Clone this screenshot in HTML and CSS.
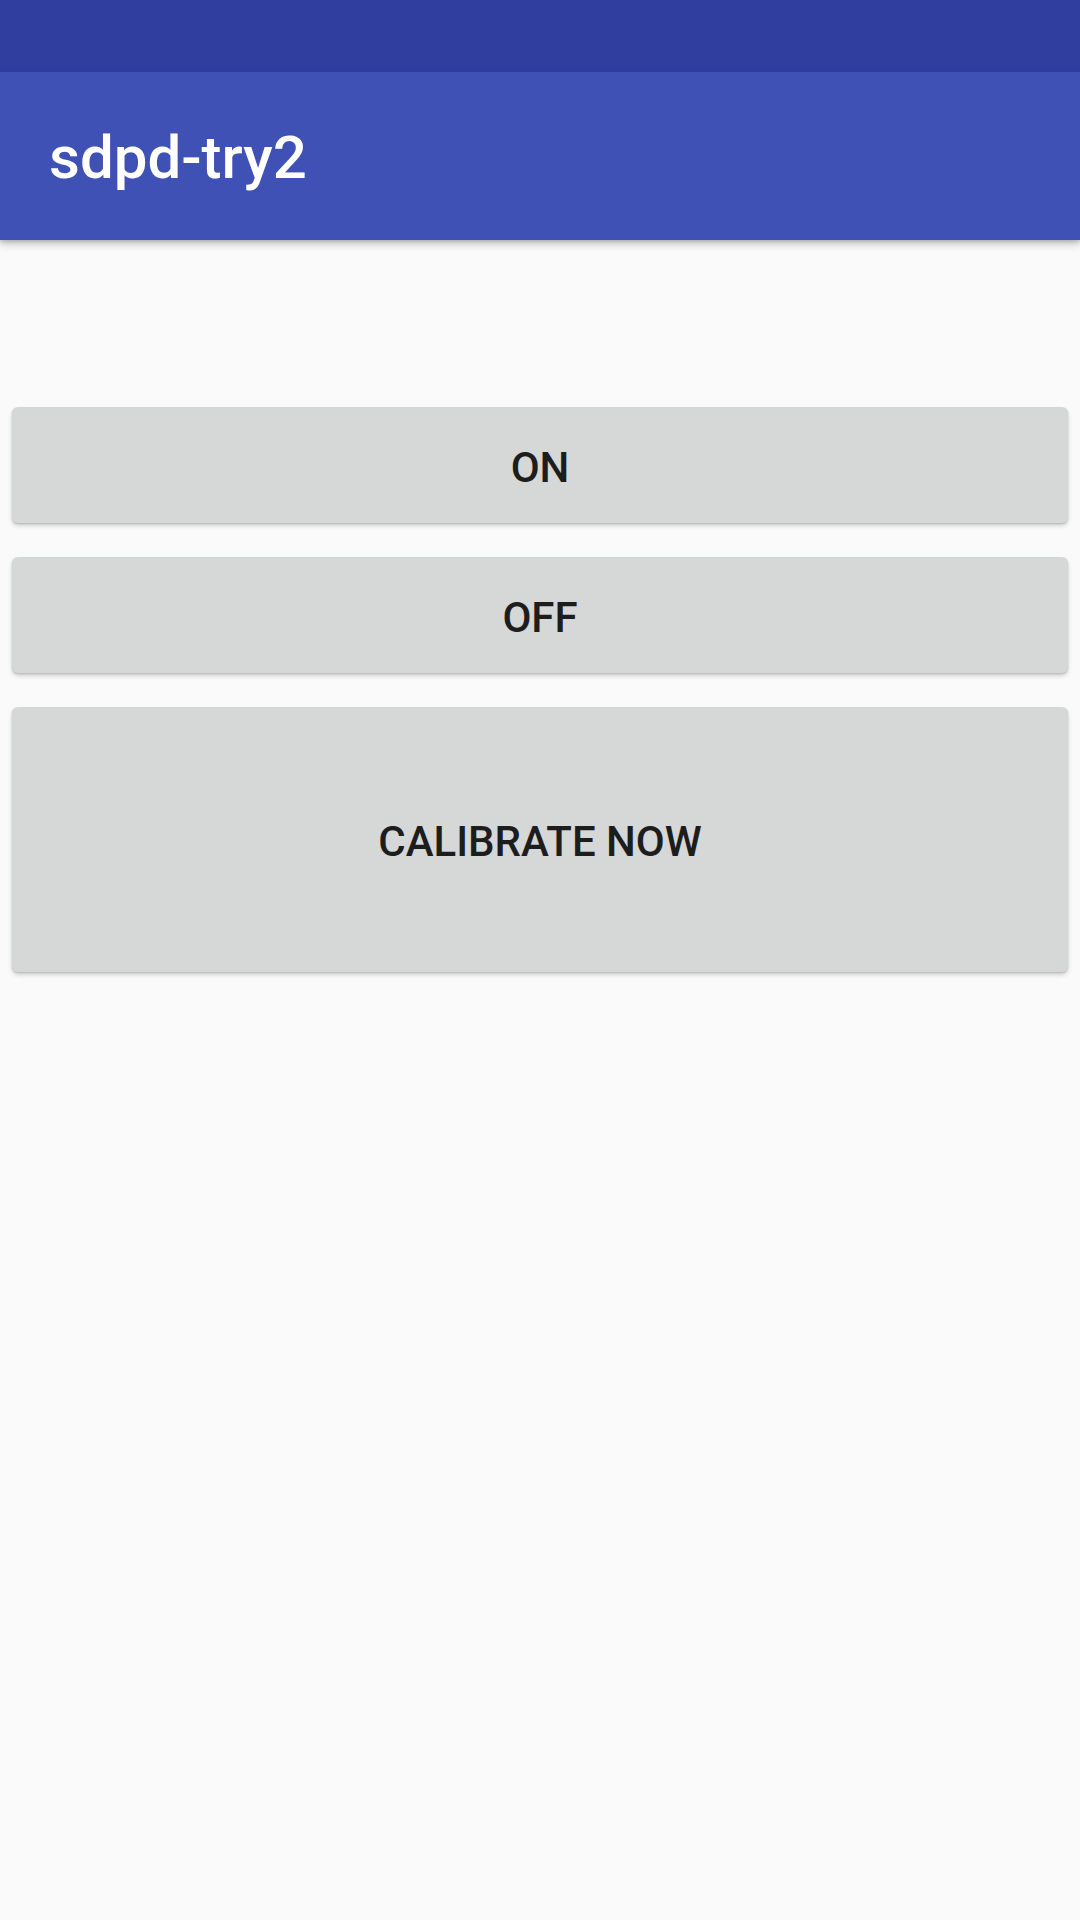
FILE: index.html
```html
<!DOCTYPE html>
<html>
<head>
<meta charset="utf-8">
<link rel="stylesheet" href="styles.css">
</head>
<body>
<div class="status-bar"></div>
<header class="app-bar"><h1 class="title">sdpd-try2</h1></header>
<main class="content">
  <button class="btn btn-short">ON</button>
  <button class="btn btn-short">OFF</button>
  <button class="btn btn-tall">CALIBRATE NOW</button>
</main>
</body>
</html>
```
FILE: styles.css
```css
html, body {
  margin: 0;
  padding: 0;
  background: #fafafa;
  width: 1080px;
  height: 1920px;
  overflow: hidden;
  font-family: Roboto, "Liberation Sans", sans-serif;
}
.status-bar {
  height: 72px;
  background: #303f9f;
}
.app-bar {
  height: 168px;
  background: #3f51b5;
  box-shadow: 0 4px 8px rgba(0,0,0,0.22), 0 2px 3px rgba(0,0,0,0.12);
  position: relative;
  z-index: 2;
  display: flex;
  align-items: center;
  padding-left: 49px;
}
.title {
  margin: 0;
  color: #ffffff;
  font-size: 60px;
  font-weight: 500;
  line-height: 1;
  position: relative;
  top: 2px;
}
.content {
  display: flex;
  flex-direction: column;
  gap: 34px;
  padding: 167px 12px 0 12px;
}
.btn {
  border: none;
  margin: 0;
  width: 100%;
  background: #d6d7d7;
  border-radius: 6px;
  box-shadow: 0 3px 4px rgba(0,0,0,0.16), 0 1px 2px rgba(0,0,0,0.14);
  color: #1d1d1d;
  font-family: Roboto, "Liberation Sans", sans-serif;
  font-size: 42px;
  font-weight: 500;
  letter-spacing: 0;
  padding: 4px 0 0 0;
  display: flex;
  align-items: center;
  justify-content: center;
}
.btn-short {
  height: 116px;
}
.btn-tall {
  height: 265px;
}
```
